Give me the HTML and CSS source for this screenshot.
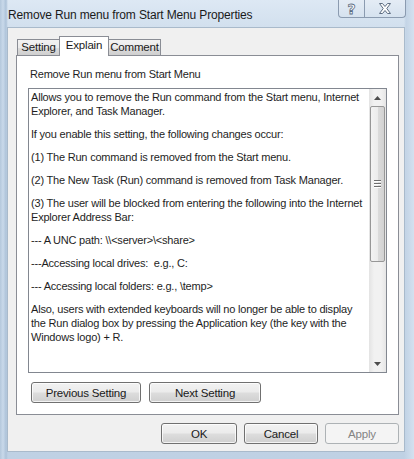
FILE: index.html
```html
<!DOCTYPE html>
<html>
<head>
<meta charset="utf-8">
<link rel="stylesheet" href="styles.css">
</head>
<body>
<div class="window">
  <div class="titlebar">
    <span class="title">Remove Run menu from Start Menu Properties</span>
    <div class="caption-btns">
      <div class="cb help">?</div>
      <div class="cb close">
        <svg width="14" height="11" viewBox="0 0 14 11"><path d="M1.5 0.5 H4.5 L7 3.5 L9.5 0.5 H12.5 L8.8 5.5 L12.5 10.5 H9.5 L7 7.5 L4.5 10.5 H1.5 L5.2 5.5 Z" fill="#fdfdfd" stroke="#5d6d82" stroke-width="1"/></svg>
      </div>
    </div>
  </div>
  <div class="client">
    <div class="tabs">
      <div class="tab tab-setting">Setting</div>
      <div class="tab tab-explain active">Explain</div>
      <div class="tab tab-comment">Comment</div>
    </div>
    <div class="panel">
      <div class="label">Remove Run menu from Start Menu</div>
      <div class="textbox">
        <div class="text">
          <p>Allows you to remove the Run command from the Start menu, Internet<br>Explorer, and Task Manager.</p>
          <p>If you enable this setting, the following changes occur:</p>
          <p>(1) The Run command is removed from the Start menu.</p>
          <p>(2) The New Task (Run) command is removed from Task Manager.</p>
          <p>(3) The user will be blocked from entering the following into the Internet<br>Explorer Address Bar:</p>
          <p>--- A UNC path: \\&lt;server&gt;\&lt;share&gt;</p>
          <p>---Accessing local drives:&nbsp; e.g., C:</p>
          <p>--- Accessing local folders: e.g., \temp&gt;</p>
          <p>Also, users with extended keyboards will no longer be able to display<br>the Run dialog box by pressing the Application key (the key with the<br>Windows logo) + R.</p>
        </div>
        <div class="scrollbar">
          <div class="sb-arrow">
            <svg width="7" height="4" viewBox="0 0 7 4"><path d="M0 4 L3.5 0 L7 4 Z" fill="#4d4d4d"/></svg>
          </div>
          <div class="sb-thumb">
            <div class="grip"><span></span><span></span><span></span></div>
          </div>
          <div class="sb-track"></div>
          <div class="sb-arrow">
            <svg width="7" height="4" viewBox="0 0 7 4"><path d="M0 0 L7 0 L3.5 4 Z" fill="#4d4d4d"/></svg>
          </div>
        </div>
      </div>
      <div class="nav-btns">
        <div class="btn btn-prev">Previous Setting</div>
        <div class="btn btn-next">Next Setting</div>
      </div>
    </div>
    <div class="dlg-btns">
      <div class="btn btn-ok">OK</div>
      <div class="btn btn-cancel">Cancel</div>
      <div class="btn btn-apply disabled">Apply</div>
    </div>
  </div>
</div>
</body>
</html>
```

FILE: styles.css
```css
* { box-sizing: border-box; }
html, body { margin: 0; padding: 0; }
body {
  width: 414px;
  height: 459px;
  overflow: hidden;
  font-family: "Liberation Sans", Arial, sans-serif;
  font-size: 11px;
  letter-spacing: -0.2px;
  color: #1e1e1e;
}
.window {
  width: 414px;
  height: 459px;
  background:
    linear-gradient(90deg, #b4c8dc 0px, #c9d9ea 3px, #aec3d9 6px, transparent 8px, transparent 404px, #c3d4e6 406px, #d4e1ef 414px),
    linear-gradient(180deg, #dde8f4 0px, #d2e0ee 27px, #c5d6e8 200px, #bfd1e4 459px);
  display: flex;
  flex-direction: column;
}
.titlebar {
  height: 27px;
  display: flex;
  justify-content: space-between;
  align-items: flex-start;
  padding-left: 8px;
  padding-right: 8px;
}
.title {
  font-size: 12px;
  letter-spacing: -0.15px;
  color: #1a1a1a;
  margin-top: 8px;
  line-height: 14px;
}
.caption-btns {
  display: flex;
  height: 18px;
  border: 1px solid #8b9bb0;
  border-top: none;
  border-radius: 0 0 4px 4px;
  background: linear-gradient(180deg, #e4ecf5, #d6e2ef);
  margin-right: -0px;
}
.cb {
  height: 17px;
  display: flex;
  align-items: center;
  justify-content: center;
}
.help {
  width: 26px;
  border-right: 1px solid #8b9bb0;
  font-size: 14px;
  font-weight: bold;
  color: #fbfbfb;
  -webkit-text-stroke: 0.8px #5d6d82;
  font-family: "DejaVu Sans", sans-serif;
  letter-spacing: 0;
}
.close { width: 40px; }
.client {
  margin-left: 7px;
  width: 398px;
  height: 425px;
  background: #f0f0f0;
  border: 1px solid #a9bacb;
  padding: 6px 6px 0 8px;
}
.tabs {
  display: flex;
  align-items: flex-end;
  height: 21px;
  padding-left: 1px;
  position: relative;
  z-index: 1;
}
.tab {
  height: 16px;
  border: 1px solid #8a8d95;
  border-bottom: none;
  border-right: none;
  background: linear-gradient(180deg, #f2f2f2 0%, #ebebeb 50%, #dddddd 51%, #cfcfcf 100%);
  text-align: center;
  line-height: 15px;
  font-size: 11.5px;
  color: #1a1a1a;
}
.tab-setting { width: 42px; }
.tab-comment { width: 52px; border-right: 1px solid #8a8d95; }
.tab.active {
  width: 50px;
  height: 20px;
  background: #ffffff;
  border-right: 1px solid #8a8d95;
  margin-bottom: -1px;
  line-height: 16px;
}
.tab-explain + .tab { border-left: none; }
.panel {
  width: 383px;
  height: 360px;
  border: 1px solid #8a8d95;
  background: #ffffff;
  padding: 11px 11px 0 11px;
}
.label {
  line-height: 14px;
  padding-left: 2px;
  margin-bottom: 7px;
  white-space: nowrap;
}
.textbox {
  width: 359px;
  height: 285px;
  border: 1px solid #828790;
  display: flex;
  background: #fff;
  overflow: hidden;
}
.text {
  flex: 1;
  padding: 1px 0 0 2px;
  line-height: 14px;
  white-space: nowrap;
  overflow: hidden;
}
.text p { margin: 0 0 9px 0; }
.scrollbar {
  width: 17px;
  display: flex;
  flex-direction: column;
  background: linear-gradient(90deg, #e3e3e3, #f1f1f1 30%, #f1f1f1 70%, #e6e6e6);
}
.sb-arrow {
  height: 17px;
  display: flex;
  align-items: center;
  justify-content: center;
}
.sb-thumb {
  height: 156px;
  margin: 0 1px;
  border: 1px solid #979797;
  border-radius: 2px;
  background: linear-gradient(90deg, #f3f3f3 0%, #ececec 50%, #dcdcdc 51%, #d2d2d2 100%);
  display: flex;
  align-items: center;
  justify-content: center;
}
.grip { display: flex; flex-direction: column; gap: 1px; }
.grip span {
  display: block;
  width: 7px;
  height: 1px;
  background: #6e6e6e;
  box-shadow: 0 1px 0 #fff;
  margin-bottom: 1px;
}
.sb-track { flex: 1; }
.nav-btns {
  display: flex;
  gap: 8px;
  margin-top: 9px;
  padding-left: 3px;
}
.btn {
  height: 21px;
  border: 1px solid #707070;
  border-radius: 3px;
  background: linear-gradient(180deg, #f2f2f2 0%, #ebebeb 48%, #dddddd 52%, #cfcfcf 100%);
  box-shadow: inset 0 0 0 1px rgba(255,255,255,0.75);
  display: flex;
  align-items: center;
  justify-content: center;
  font-size: 11.5px;
  color: #1a1a1a;
}
.btn-prev { width: 110px; }
.btn-next { width: 112px; }
.dlg-btns {
  display: flex;
  justify-content: flex-end;
  gap: 7px;
  margin-top: 8px;
  width: 383px;
}
.btn-ok { width: 76px; }
.btn-cancel { width: 74px; }
.btn-apply { width: 74px; }
.btn.disabled {
  border-color: #adb2b5;
  background: #f4f4f4;
  box-shadow: none;
  color: #838383;
}
```
